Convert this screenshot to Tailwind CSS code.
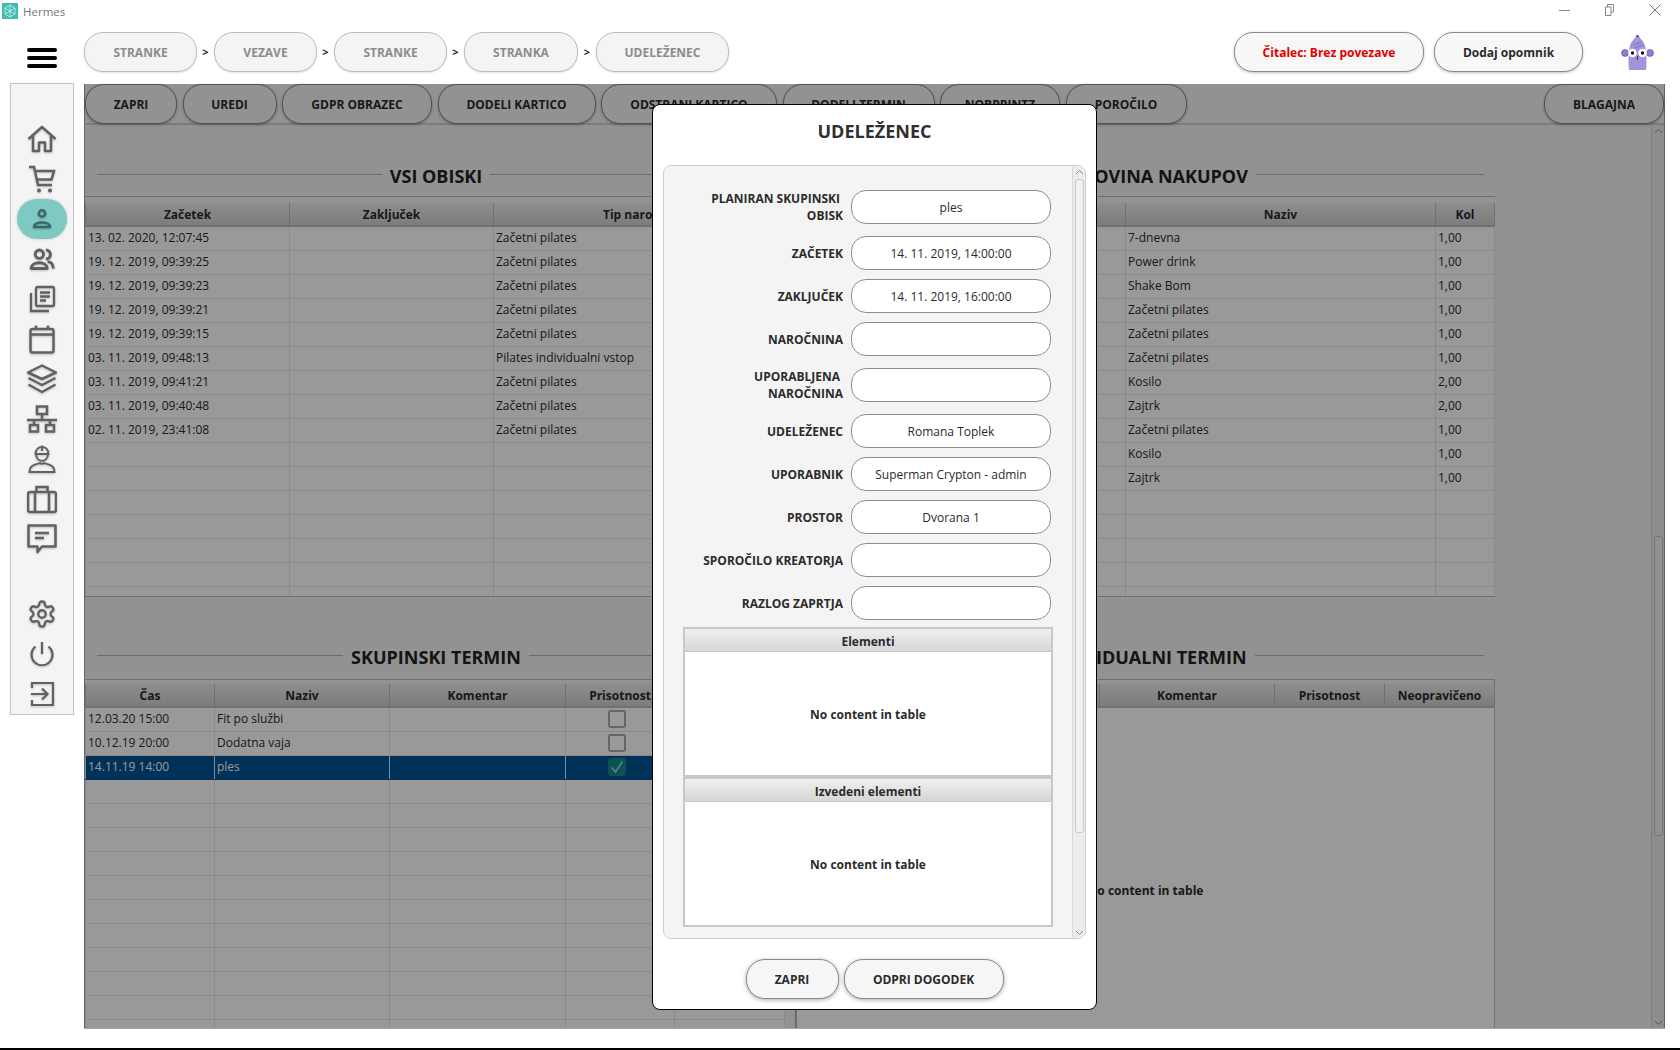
<!DOCTYPE html>
<html lang="sl">
<head>
<meta charset="utf-8">
<title>Hermes</title>
<script src="https://cdn.jsdelivr.net/npm/@tailwindcss/browser@4"></script>
</head>
<body class="bg-white">
<div class="relative flex h-[1050px] w-[1680px] flex-col overflow-hidden bg-white font-['Open_Sans',sans-serif] text-[#2b2b2b]">

  <!-- title bar -->
  <div class="flex h-6 shrink-0 items-start">
    <svg class="ml-[2px] mt-[3px] h-4 w-4" viewBox="0 0 16 16"><rect width="16" height="16" fill="#3dbcb0"/><path d="M8 2 L13 5 V11 L8 14 L3 11 V5Z M8 2 V14 M3 5 L13 11 M13 5 L3 11" fill="none" stroke="#d8f3ef" stroke-width=".8"/></svg>
    <span class="ml-[5px] mt-[4px] text-[11.5px] leading-4 text-[#777]">Hermes</span>
    <div class="ml-auto mr-[19px] mt-[4px] flex items-center gap-[34px]">
      <svg class="h-3 w-[11px]" viewBox="0 0 11 12"><path d="M0 6.500H11" stroke="#888" stroke-width="1"/></svg>
      <svg class="h-3 w-[11px]" viewBox="0 0 11 12"><path d="M3.500 3V.5H9.500V8H7M1.500 3H7V11.500H1.500Z" fill="none" stroke="#888" stroke-width="1"/></svg>
      <svg class="h-3 w-3" viewBox="0 0 12 12"><path d="M.5 .5L11.500 11.500M11.500 .5L.5 11.500" stroke="#777" stroke-width="1"/></svg>
    </div>
  </div>

  <!-- header -->
  <div class="flex h-[60px] shrink-0 items-start pt-2">
    <div class="ml-[27px] mt-4 flex w-[30px] flex-col gap-[4px]">
      <span class="h-1 rounded-full bg-black"></span><span class="h-1 rounded-full bg-black"></span><span class="h-1 rounded-full bg-black"></span>
    </div>
    <div class="ml-[27px] flex items-center text-[12px] font-bold text-[#8c8c8c]">
      <span class="flex h-10 w-[113px] items-center justify-center rounded-[19px] border border-[#bdbdbd] bg-[#f4f4f4] pt-px shadow-[0_1px_2px_rgba(0,0,0,0.12)]">STRANKE</span>
      <span class="w-[17px] text-center text-[11px] font-bold text-[#222]">&gt;</span>
      <span class="flex h-10 w-[103px] items-center justify-center rounded-[19px] border border-[#bdbdbd] bg-[#f4f4f4] pt-px shadow-[0_1px_2px_rgba(0,0,0,0.12)]">VEZAVE</span>
      <span class="w-[17px] text-center text-[11px] font-bold text-[#222]">&gt;</span>
      <span class="flex h-10 w-[113px] items-center justify-center rounded-[19px] border border-[#bdbdbd] bg-[#f4f4f4] pt-px shadow-[0_1px_2px_rgba(0,0,0,0.12)]">STRANKE</span>
      <span class="w-[17px] text-center text-[11px] font-bold text-[#222]">&gt;</span>
      <span class="flex h-10 w-[114px] items-center justify-center rounded-[19px] border border-[#bdbdbd] bg-[#f4f4f4] pt-px shadow-[0_1px_2px_rgba(0,0,0,0.12)]">STRANKA</span>
      <span class="w-[18px] text-center text-[11px] font-bold text-[#222]">&gt;</span>
      <span class="flex h-10 w-[133px] items-center justify-center rounded-[19px] border border-[#bdbdbd] bg-[#f4f4f4] pt-px shadow-[0_1px_2px_rgba(0,0,0,0.12)]">UDELEŽENEC</span>
    </div>
    <div class="ml-auto flex items-center text-[12px] font-bold">
      <span class="flex h-10 w-[190px] items-center justify-center rounded-[19px] border border-[#8a8a8a] bg-[#f7f7f7] pt-px text-[#e00000] shadow-[0_1px_3px_rgba(0,0,0,0.25)]">Čitalec: Brez povezave</span>
      <span class="ml-[10px] flex h-10 w-[149px] items-center justify-center rounded-[19px] border border-[#8a8a8a] bg-[#f7f7f7] pt-px shadow-[0_1px_3px_rgba(0,0,0,0.25)]">Dodaj opomnik</span>
    </div>
    <svg class="ml-[38px] mr-[26px] mt-[2px] h-[37px] w-[33px]" viewBox="0 0 33 37">
      <path d="M8 36 C7 30 7.500 16 9.500 10 C11 7 14 4 16.500 1 C19 4 22 7 23.500 10 C25.500 16 26 30 25 36Z" fill="#a393db"/>
      <path d="M14.500 3 L16.500 0.500 L18.500 3Z" fill="#4d3f8f"/>
      <path d="M12 11 L21 8 M13 14 L22 11" stroke="#7b6bbd" stroke-width=".8"/>
      <circle cx="4" cy="19" r="3.500" fill="#8d7dcc" stroke="#5d4f9f" stroke-width=".6"/><circle cx="29" cy="19" r="3.500" fill="#8d7dcc" stroke="#5d4f9f" stroke-width=".6"/>
      <circle cx="11.500" cy="19" r="4.200" fill="#fff"/><circle cx="21.500" cy="19" r="4.200" fill="#fff"/>
      <circle cx="11.500" cy="19" r="1.700" fill="#111"/><circle cx="21.500" cy="19" r="1.700" fill="#111"/>
      <path d="M16.500 22 V26" stroke="#332a66" stroke-width="1"/>
    </svg>
  </div>

  <!-- body row -->
  <div class="flex h-[945px] shrink-0 items-start pl-[10px]">
    <!-- sidebar -->
    <nav class="-mt-px flex h-[632px] w-[64px] shrink-0 flex-col items-center border border-[#c6c6c6] bg-[#f4f4f4] pt-[35px] text-[#616161] shadow-[0_0_2px_rgba(0,0,0,0.08)] [&_svg]:drop-shadow-[0_1px_1px_rgba(0,0,0,0.22)]">
      <span class="flex h-10 items-center justify-center"><svg class="h-[30px] w-[30px]" viewBox="0 0 30 30" fill="none" stroke="currentColor" stroke-width="2.500" stroke-linejoin="round"><path d="M1.500 15 L15 3 L28.500 15 M6 12 V27 H12 V18.500 H18 V27 H24 V12"/></svg></span>
      <span class="flex h-10 items-center justify-center"><svg class="h-[30px] w-[30px]" viewBox="0 0 30 30" fill="none" stroke="currentColor" stroke-width="2.500"><path d="M2 3 H7 L11 21 H25 M8.500 7 H27 L24.500 15.500 H10"/><circle cx="12" cy="26.500" r="2" fill="currentColor" stroke="none"/><circle cx="23" cy="26.500" r="2" fill="currentColor" stroke="none"/></svg></span>
      <span class="flex h-10 w-[50px] items-center justify-center rounded-[22px] bg-[#7fc9c3] text-[#3c6664] shadow-[0_0_3px_rgba(0,0,0,0.2)]"><svg class="h-[26px] w-[26px]" viewBox="0 0 26 26" fill="none" stroke="currentColor" stroke-width="2.400"><circle cx="13" cy="7.500" r="3.200"/><path d="M5 21 C5 15 21 15 21 21 Z" stroke-linejoin="round"/></svg></span>
      <span class="flex h-10 items-center justify-center"><svg class="h-[26px] w-[26px]" viewBox="0 0 30 30" fill="none" stroke="currentColor" stroke-width="3.400" stroke-linejoin="round"><circle cx="12" cy="9.500" r="4.800"/><path d="M19.500 4.500 a5.200 5.200 0 0 1 0 10.400"/><path d="M2.500 26 C2.500 17 21 17 21 26 Z"/><path d="M21.500 18 C26 18.500 28 22 28 26"/></svg></span>
      <span class="flex h-10 items-center justify-center"><svg class="h-[30px] w-[30px]" viewBox="0 0 30 30" fill="none" stroke="currentColor" stroke-width="2.300"><rect x="9" y="3" width="18" height="19" rx="1.500"/><path d="M4 9 V27 H22 M13 8.500 H23 M13 12.500 H23 M13 16.500 H19"/></svg></span>
      <span class="flex h-10 items-center justify-center"><svg class="h-[30px] w-[30px]" viewBox="0 0 30 30" fill="none" stroke="currentColor" stroke-width="2.500"><rect x="3.500" y="5" width="23" height="23.500" rx="2"/><path d="M3.500 10.500 H26.500 M9 1.500 V5 M21 1.500 V5"/></svg></span>
      <span class="flex h-10 items-center justify-center"><svg class="h-[30px] w-[30px]" viewBox="0 0 30 30" fill="none" stroke="currentColor" stroke-width="2.500" stroke-linejoin="round"><path d="M15 1.500 L29 8.500 L15 15 L1 8.500Z M1.500 14 L15 21 L28.500 14 M1.500 20.500 L15 28 L28.500 20.500"/></svg></span>
      <span class="flex h-10 items-center justify-center"><svg class="h-[30px] w-[30px]" viewBox="0 0 30 30" fill="none" stroke="currentColor" stroke-width="2.500"><rect x="10" y="2.500" width="10" height="7.500"/><path d="M15 10 V16 M0 16 H30 M7 16 V21 M23 16 V21"/><rect x="3" y="21" width="8" height="6.500"/><rect x="19" y="21" width="8" height="6.500"/></svg></span>
      <span class="flex h-10 items-center justify-center"><svg class="h-[30px] w-[30px]" viewBox="0 0 30 30" fill="none" stroke="currentColor" stroke-width="1.900"><path d="M8.500 10 C8.500 0.500 21.500 0.500 21.500 10 Z M15 1.500 V7"/><path d="M9 10 C9 19 21 19 21 10"/><path d="M2.500 28 C2.500 20 10 20.500 13 19 C14 20 16 20 17 19 C20 20.500 27.500 20 27.500 28 Z"/></svg></span>
      <span class="flex h-10 items-center justify-center"><svg class="h-[30px] w-[30px]" viewBox="0 0 30 30" fill="none" stroke="currentColor" stroke-width="2.500"><rect x="1" y="8" width="28" height="20" rx="2"/><path d="M9.500 8 V3 H20.500 V8 M8 8 V28 M22 8 V28"/></svg></span>
      <span class="flex h-10 items-center justify-center"><svg class="h-[30px] w-[30px]" viewBox="0 0 30 30" fill="none" stroke="currentColor" stroke-width="2.500" stroke-linejoin="round"><path d="M1.500 1.500 H28.500 V22.500 H15 L10.500 28 V22.500 H1.500Z"/><path d="M8 9 H22 M8 14 H17"/></svg></span>
      <span class="mt-[35px] flex h-10 items-center justify-center"><svg class="h-[30px] w-[30px]" viewBox="0 0 24 24" fill="none" stroke="currentColor" stroke-width="1.900" stroke-linejoin="round"><path d="M12.220 2h-.44a2 2 0 0 0-2 2v.18a2 2 0 0 1-1 1.730l-.43.25a2 2 0 0 1-2 0l-.15-.08a2 2 0 0 0-2.730.73l-.22.38a2 2 0 0 0 .73 2.730l.15.1a2 2 0 0 1 1 1.720v.51a2 2 0 0 1-1 1.740l-.15.09a2 2 0 0 0-.73 2.730l.22.38a2 2 0 0 0 2.730.73l.15-.08a2 2 0 0 1 2 0l.43.25a2 2 0 0 1 1 1.730V20a2 2 0 0 0 2 2h.44a2 2 0 0 0 2-2v-.18a2 2 0 0 1 1-1.730l.43-.25a2 2 0 0 1 2 0l.15.08a2 2 0 0 0 2.730-.73l.22-.39a2 2 0 0 0-.73-2.730l-.15-.08a2 2 0 0 1-1-1.740v-.5a2 2 0 0 1 1-1.740l.15-.09a2 2 0 0 0 .73-2.730l-.22-.38a2 2 0 0 0-2.730-.73l-.15.08a2 2 0 0 1-2 0l-.43-.25a2 2 0 0 1-1-1.730V4a2 2 0 0 0-2-2z"/><circle cx="12" cy="12" r="3"/></svg></span>
      <span class="flex h-10 items-center justify-center"><svg class="h-[30px] w-[30px]" viewBox="0 0 30 30" fill="none" stroke="currentColor" stroke-width="2.200"><path d="M15 3 V15 M8.500 7.500 A10.500 10.500 0 1 0 21.500 7.500"/></svg></span>
      <span class="flex h-10 items-center justify-center"><svg class="h-[30px] w-[30px]" viewBox="0 0 30 30" fill="none" stroke="currentColor" stroke-width="2.200"><path d="M5 9 V4 H26 V26 H5 V21 M4 15 H20 M15 9.500 L20.500 15 L15 20.500"/></svg></span>
    </nav>

    <!-- main content with dim overlay -->
    <main class="relative ml-[10px] flex h-[945px] w-[1581px] flex-col border-x border-b border-[#a8a8a8] bg-[#f4f4f4]">
      <div class="flex h-[41px] shrink-0 items-start gap-[5.5px] border-b-2 border-[#cfcfcf] text-[12px] font-bold">
        <span class="flex h-10 w-[92px] items-center justify-center rounded-[19px] border border-[#8a8a8a] bg-[#f4f4f4] pt-px shadow-[0_1px_3px_rgba(0,0,0,0.3)]">ZAPRI</span>
        <span class="flex h-10 w-[94px] items-center justify-center rounded-[19px] border border-[#8a8a8a] bg-[#f4f4f4] pt-px shadow-[0_1px_3px_rgba(0,0,0,0.3)]">UREDI</span>
        <span class="flex h-10 w-[150px] items-center justify-center rounded-[19px] border border-[#8a8a8a] bg-[#f4f4f4] pt-px shadow-[0_1px_3px_rgba(0,0,0,0.3)]">GDPR OBRAZEC</span>
        <span class="flex h-10 w-[158px] items-center justify-center rounded-[19px] border border-[#8a8a8a] bg-[#f4f4f4] pt-px shadow-[0_1px_3px_rgba(0,0,0,0.3)]">DODELI KARTICO</span>
        <span class="flex h-10 w-[176px] items-center justify-center rounded-[19px] border border-[#8a8a8a] bg-[#f4f4f4] pt-px shadow-[0_1px_3px_rgba(0,0,0,0.3)]">ODSTRANI KARTICO</span>
        <span class="flex h-10 w-[152px] items-center justify-center rounded-[19px] border border-[#8a8a8a] bg-[#f4f4f4] pt-px shadow-[0_1px_3px_rgba(0,0,0,0.3)]">DODELI TERMIN</span>
        <span class="flex h-10 w-[120px] items-center justify-center rounded-[19px] border border-[#8a8a8a] bg-[#f4f4f4] pt-px shadow-[0_1px_3px_rgba(0,0,0,0.3)]">NOBPRINTZ</span>
        <span class="flex h-10 w-[121px] items-center justify-center rounded-[19px] border border-[#8a8a8a] bg-[#f4f4f4] pt-px shadow-[0_1px_3px_rgba(0,0,0,0.3)]">POROČILO</span>
        <span class="ml-auto flex h-10 w-[120px] items-center justify-center rounded-[19px] border border-[#8a8a8a] bg-[#f4f4f4] pt-px shadow-[0_1px_3px_rgba(0,0,0,0.3)]">BLAGAJNA</span>
      </div>

      <div class="flex min-h-0 flex-1 overflow-hidden">
        <!-- left column -->
        <section class="flex h-full w-[711px] shrink-0 flex-col pt-[39px]">
          <div class="mb-2 ml-3 flex h-6 w-[678px] shrink-0 items-center gap-2 text-[18px] font-bold text-[#222]"><span class="mb-1 h-px flex-1 bg-[#b5b5b5]"></span>VSI OBISKI<span class="mb-1 h-px flex-1 bg-[#b5b5b5]"></span></div>
          <div class="h-[401px] w-[710px] shrink-0 overflow-hidden border-y border-[#bcbcbc] pt-[6px]">
            <table class="w-full table-fixed border-collapse text-[12px] [&_td]:h-6 [&_td]:border [&_td]:border-[#e6e6e6] [&_td]:bg-white [&_td]:px-[2px] [&_td]:whitespace-nowrap [&_th]:h-[23px] [&_th]:border-x [&_th]:border-b-2 [&_th]:border-[#bdbdbd] [&_th]:bg-linear-to-b [&_th]:from-[#ececec] [&_th]:to-[#cfcfcf] [&_th]:pt-px [&_th]:font-bold">
              <colgroup><col class="w-[204px]"><col class="w-[204px]"><col></colgroup>
              <thead><tr><th>Začetek</th><th>Zaključek</th><th>Tip naročnine</th></tr></thead>
              <tbody>
                <tr><td>13. 02. 2020, 12:07:45</td><td></td><td>Začetni pilates</td></tr>
                <tr><td>19. 12. 2019, 09:39:25</td><td></td><td>Začetni pilates</td></tr>
                <tr><td>19. 12. 2019, 09:39:23</td><td></td><td>Začetni pilates</td></tr>
                <tr><td>19. 12. 2019, 09:39:21</td><td></td><td>Začetni pilates</td></tr>
                <tr><td>19. 12. 2019, 09:39:15</td><td></td><td>Začetni pilates</td></tr>
                <tr><td>03. 11. 2019, 09:48:13</td><td></td><td>Pilates individualni vstop</td></tr>
                <tr><td>03. 11. 2019, 09:41:21</td><td></td><td>Začetni pilates</td></tr>
                <tr><td>03. 11. 2019, 09:40:48</td><td></td><td>Začetni pilates</td></tr>
                <tr><td>02. 11. 2019, 23:41:08</td><td></td><td>Začetni pilates</td></tr>
                <tr><td></td><td></td><td></td></tr>
                <tr><td></td><td></td><td></td></tr>
                <tr><td></td><td></td><td></td></tr>
                <tr><td></td><td></td><td></td></tr>
                <tr><td></td><td></td><td></td></tr>
                <tr><td></td><td></td><td></td></tr>
                <tr><td></td><td></td><td></td></tr>
              </tbody>
            </table>
          </div>

          <div class="mb-[10px] ml-3 mt-[48px] flex h-6 w-[678px] shrink-0 items-center gap-2 text-[18px] font-bold text-[#222]"><span class="mb-1 h-px flex-1 bg-[#b5b5b5]"></span>SKUPINSKI TERMIN<span class="mb-1 h-px flex-1 bg-[#b5b5b5]"></span></div>
          <div class="w-[711px] flex-1 overflow-hidden border-r border-[#a8a8a8]">
            <div class="w-[700px] border-t border-[#bcbcbc] pt-[4px]">
              <table class="w-full table-fixed border-collapse text-[12px] [&_td]:h-6 [&_td]:border [&_td]:border-[#e6e6e6] [&_td]:bg-white [&_td]:px-[2px] [&_td]:whitespace-nowrap [&_th]:h-[23px] [&_th]:border-x [&_th]:border-b-2 [&_th]:border-[#bdbdbd] [&_th]:bg-linear-to-b [&_th]:from-[#ececec] [&_th]:to-[#cfcfcf] [&_th]:pt-px [&_th]:font-bold">
                <colgroup><col class="w-[129px]"><col class="w-[175px]"><col class="w-[176px]"><col class="w-[109px]"><col></colgroup>
                <thead><tr><th>Čas</th><th>Naziv</th><th>Komentar</th><th>Prisotnost</th><th>Neopravičeno</th></tr></thead>
                <tbody>
                  <tr><td>12.03.20 15:00</td><td>Fit po službi</td><td></td><td><span class="-mt-px ml-[40px] block h-[18px] w-[18px] rounded-[3px] border-2 border-[#a8a8a8] bg-white"></span></td><td></td></tr>
                  <tr><td>10.12.19 20:00</td><td>Dodatna vaja</td><td></td><td><span class="-mt-px ml-[40px] block h-[18px] w-[18px] rounded-[3px] border-2 border-[#a8a8a8] bg-white"></span></td><td></td></tr>
                  <tr class="[&_td]:border-y-[#005293]! [&_td]:bg-[#005293]! [&_td]:text-white!"><td>14.11.19 14:00</td><td>ples</td><td></td><td><span class="-mt-px ml-[40px] flex h-[18px] w-[18px] items-center justify-center rounded-[3px] bg-[#14878f]"><svg class="h-3.5 w-3.5" viewBox="0 0 14 14" fill="none" stroke="#a8d4d4" stroke-width="1.500"><path d="M1.500 7.500 L5.500 12 L12.500 1.500"/></svg></span></td><td></td></tr>
                  <tr><td></td><td></td><td></td><td></td><td></td></tr>
                  <tr><td></td><td></td><td></td><td></td><td></td></tr>
                  <tr><td></td><td></td><td></td><td></td><td></td></tr>
                  <tr><td></td><td></td><td></td><td></td><td></td></tr>
                  <tr><td></td><td></td><td></td><td></td><td></td></tr>
                  <tr><td></td><td></td><td></td><td></td><td></td></tr>
                  <tr><td></td><td></td><td></td><td></td><td></td></tr>
                  <tr><td></td><td></td><td></td><td></td><td></td></tr>
                  <tr><td></td><td></td><td></td><td></td><td></td></tr>
                  <tr><td></td><td></td><td></td><td></td><td></td></tr>
                  <tr><td></td><td></td><td></td><td></td><td></td></tr>
                </tbody>
              </table>
            </div>
          </div>
        </section>

        <!-- right column -->
        <section class="flex h-full w-[699px] shrink-0 flex-col pt-[39px]">
          <div class="mb-2 ml-[11px] flex h-6 w-[677px] shrink-0 items-center gap-2 text-[18px] font-bold text-[#222]"><span class="mb-1 h-px flex-1 bg-[#b5b5b5]"></span>ZGODOVINA NAKUPOV<span class="mb-1 h-px flex-1 bg-[#b5b5b5]"></span></div>
          <div class="h-[401px] w-[699px] shrink-0 overflow-hidden border-y border-[#bcbcbc] pt-[6px]">
            <table class="w-full table-fixed border-collapse text-[12px] [&_td]:h-6 [&_td]:border [&_td]:border-[#e6e6e6] [&_td]:bg-white [&_td]:px-[2px] [&_td]:whitespace-nowrap [&_th]:h-[23px] [&_th]:border-x [&_th]:border-b-2 [&_th]:border-[#bdbdbd] [&_th]:bg-linear-to-b [&_th]:from-[#ececec] [&_th]:to-[#cfcfcf] [&_th]:pt-px [&_th]:font-bold">
              <colgroup><col class="w-[329px]"><col class="w-[310px]"><col></colgroup>
              <thead><tr><th></th><th>Naziv</th><th>Kol</th></tr></thead>
              <tbody>
                <tr><td></td><td>7-dnevna</td><td>1,00</td></tr>
                <tr><td></td><td>Power drink</td><td>1,00</td></tr>
                <tr><td></td><td>Shake Bom</td><td>1,00</td></tr>
                <tr><td></td><td>Začetni pilates</td><td>1,00</td></tr>
                <tr><td></td><td>Začetni pilates</td><td>1,00</td></tr>
                <tr><td></td><td>Začetni pilates</td><td>1,00</td></tr>
                <tr><td></td><td>Kosilo</td><td>2,00</td></tr>
                <tr><td></td><td>Zajtrk</td><td>2,00</td></tr>
                <tr><td></td><td>Začetni pilates</td><td>1,00</td></tr>
                <tr><td></td><td>Kosilo</td><td>1,00</td></tr>
                <tr><td></td><td>Zajtrk</td><td>1,00</td></tr>
                <tr><td></td><td></td><td></td></tr>
                <tr><td></td><td></td><td></td></tr>
                <tr><td></td><td></td><td></td></tr>
                <tr><td></td><td></td><td></td></tr>
                <tr><td></td><td></td><td></td></tr>
              </tbody>
            </table>
          </div>

          <div class="mb-[10px] ml-[11px] mt-[48px] flex h-6 w-[677px] shrink-0 items-center gap-2 text-[18px] font-bold text-[#222]"><span class="mb-1 h-px flex-1 bg-[#b5b5b5]"></span>INDIVIDUALNI TERMIN<span class="mb-1 h-px flex-1 bg-[#b5b5b5]"></span></div>
          <div class="flex h-[395px] w-[699px] shrink-0 flex-col border-x border-t border-[#bcbcbc] pt-[4px]">
            <div class="grid h-[24px] shrink-0 grid-cols-[303px_175px_110px_1fr] border-b-2 border-[#bdbdbd] bg-linear-to-b from-[#ececec] to-[#cfcfcf] text-center text-[12px] font-bold leading-[24px]">
              <span class="border-r border-[#bdbdbd]"></span><span class="border-r border-[#bdbdbd]">Komentar</span><span class="border-r border-[#bdbdbd]">Prisotnost</span><span>Neopravičeno</span>
            </div>
            <div class="flex flex-1 items-center justify-center bg-white text-[12px] font-bold">No content in table</div>
          </div>
        </section>

        <div class="flex-1"></div>

        <!-- page scrollbar -->
        <div class="flex h-full w-[13px] shrink-0 flex-col items-center border-l border-[#d2d2d2] bg-[#ececec]">
          <svg class="mt-[3px] h-[7px] w-[9px]" viewBox="0 0 9 7"><path d="M1 5 L4.500 1.500 L8 5" fill="none" stroke="#8a8a8a"/></svg>
          <div class="mt-[401px] h-[300px] w-[9px] rounded-[3px] border border-[#c0c0c0] bg-[#f1f1f1]"></div>
          <svg class="mb-[2px] mt-auto h-[7px] w-[9px]" viewBox="0 0 9 7"><path d="M1 2 L4.500 5.500 L8 2" fill="none" stroke="#8a8a8a"/></svg>
        </div>
      </div>

      <div class="absolute inset-0 -mx-px bg-black/40"></div>
    </main>
  </div>

  <div class="flex-1"></div>
  <div class="h-[2px] shrink-0 bg-black"></div>

  <!-- modal dialog -->
  <div class="absolute left-[652px] top-[104px] flex h-[906px] w-[445px] flex-col rounded-lg border border-black bg-white px-[10px]">
    <h2 class="flex h-[60px] shrink-0 items-center justify-center pb-[8px] text-[18px] font-bold text-[#2f2f2f]">UDELEŽENEC</h2>
    <div class="flex h-[774px] shrink-0 overflow-hidden rounded-lg border border-[#cfcfcf] bg-[#f4f4f4]">
      <div class="flex w-[408px] shrink-0 flex-col gap-[9px] pt-[24px] text-[12px]">
        <div class="flex h-[37px] items-start gap-2"><span class="flex w-[179px] flex-col items-end text-right font-bold leading-[17px]"><span class="pr-[3px]">PLANIRAN SKUPINSKI</span><span>OBISK</span></span><span class="flex h-[34px] w-[200px] items-center justify-center rounded-[15px] border border-[#8d8d8d] bg-white pt-[2px]">ples</span></div>
        <div class="flex h-[34px] items-center gap-2"><span class="w-[179px] pt-px text-right font-bold">ZAČETEK</span><span class="flex h-[34px] w-[200px] items-center justify-center rounded-[15px] border border-[#8d8d8d] bg-white pt-px">14. 11. 2019, 14:00:00</span></div>
        <div class="flex h-[34px] items-center gap-2"><span class="w-[179px] pt-px text-right font-bold">ZAKLJUČEK</span><span class="flex h-[34px] w-[200px] items-center justify-center rounded-[15px] border border-[#8d8d8d] bg-white pt-px">14. 11. 2019, 16:00:00</span></div>
        <div class="flex h-[37px] items-start gap-2"><span class="w-[179px] pt-px text-right font-bold leading-[34px]">NAROČNINA</span><span class="h-[34px] w-[200px] rounded-[15px] border border-[#8d8d8d] bg-white"></span></div>
        <div class="flex h-[37px] items-start gap-2"><span class="flex w-[179px] flex-col items-end text-right font-bold leading-[17px]"><span class="pr-[3px]">UPORABLJENA</span><span>NAROČNINA</span></span><span class="h-[34px] w-[200px] rounded-[15px] border border-[#8d8d8d] bg-white"></span></div>
        <div class="flex h-[34px] items-center gap-2"><span class="w-[179px] pt-px text-right font-bold">UDELEŽENEC</span><span class="flex h-[34px] w-[200px] items-center justify-center rounded-[15px] border border-[#8d8d8d] bg-white pt-px">Romana Toplek</span></div>
        <div class="flex h-[34px] items-center gap-2"><span class="w-[179px] pt-px text-right font-bold">UPORABNIK</span><span class="flex h-[34px] w-[200px] items-center justify-center rounded-[15px] border border-[#8d8d8d] bg-white pt-px">Superman Crypton - admin</span></div>
        <div class="flex h-[34px] items-center gap-2"><span class="w-[179px] pt-px text-right font-bold">PROSTOR</span><span class="flex h-[34px] w-[200px] items-center justify-center rounded-[15px] border border-[#8d8d8d] bg-white pt-px">Dvorana 1</span></div>
        <div class="flex h-[34px] items-center gap-2"><span class="w-[179px] pt-px text-right font-bold">SPOROČILO KREATORJA</span><span class="h-[34px] w-[200px] rounded-[15px] border border-[#8d8d8d] bg-white"></span></div>
        <div class="flex h-[34px] items-center gap-2"><span class="w-[179px] pt-px text-right font-bold">RAZLOG ZAPRTJA</span><span class="h-[34px] w-[200px] rounded-[15px] border border-[#8d8d8d] bg-white"></span></div>
        <div class="-mt-[2px] ml-[19px] flex h-[150px] w-[370px] shrink-0 flex-col border-2 border-[#c8c8c8] bg-white font-bold">
          <div class="h-[23px] shrink-0 border-b border-[#c8c8c8] bg-linear-to-b from-[#f0f0f0] to-[#d6d6d6] text-center leading-[25px]">Elementi</div>
          <div class="flex flex-1 items-center justify-center pt-[3px]">No content in table</div>
        </div>
        <div class="-mt-[9px] ml-[19px] flex h-[150px] w-[370px] shrink-0 flex-col border-2 border-[#c8c8c8] bg-white font-bold">
          <div class="h-[23px] shrink-0 border-b border-[#c8c8c8] bg-linear-to-b from-[#f0f0f0] to-[#d6d6d6] text-center leading-[25px]">Izvedeni elementi</div>
          <div class="flex flex-1 items-center justify-center pt-[3px]">No content in table</div>
        </div>
      </div>
      <div class="ml-auto flex h-full w-[14px] shrink-0 flex-col items-center border-l border-[#d8d8d8] bg-[#ececec]">
        <svg class="mt-[3px] h-[7px] w-[9px]" viewBox="0 0 9 7"><path d="M1 5 L4.500 1.500 L8 5" fill="none" stroke="#8a8a8a"/></svg>
        <div class="mt-[3px] h-[654px] w-[9px] rounded-[3px] border border-[#c8c8c8] bg-[#f1f1f1]"></div>
        <svg class="mb-[2px] mt-auto h-[7px] w-[9px]" viewBox="0 0 9 7"><path d="M1 2 L4.500 5.500 L8 2" fill="none" stroke="#8a8a8a"/></svg>
      </div>
    </div>
    <div class="mt-[20px] flex justify-center gap-[5px] text-[12px] font-bold">
      <span class="flex h-10 w-[93px] items-center justify-center rounded-[19px] border border-[#8a8a8a] bg-[#f6f6f6] pt-px shadow-[0_1px_4px_rgba(0,0,0,0.35)]">ZAPRI</span>
      <span class="flex h-10 w-[160px] items-center justify-center rounded-[19px] border border-[#8a8a8a] bg-[#f6f6f6] pt-px shadow-[0_1px_4px_rgba(0,0,0,0.35)]">ODPRI DOGODEK</span>
    </div>
  </div>
</div>
</body>
</html>
